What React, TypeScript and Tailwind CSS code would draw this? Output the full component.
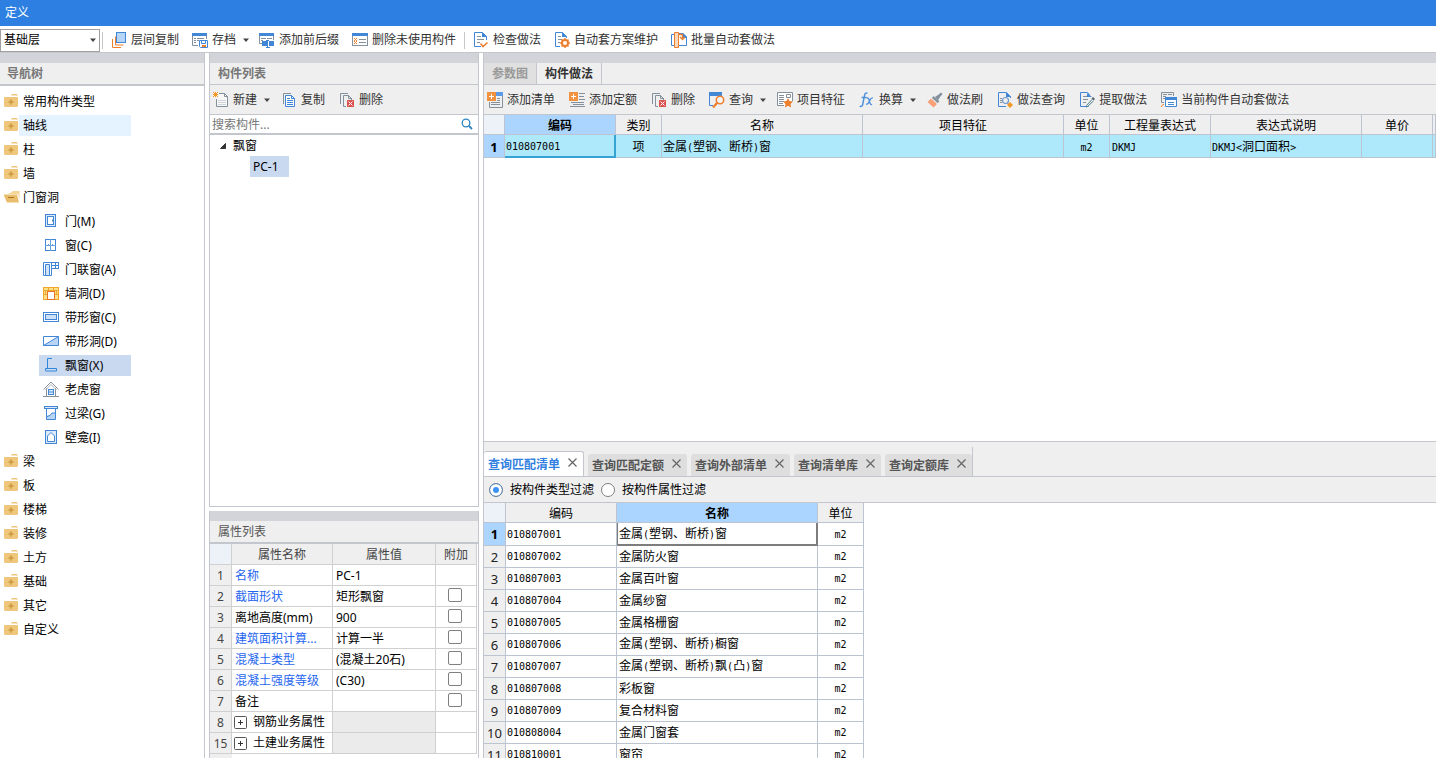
import React, { useState } from "react";
import type { ReactNode } from "react";

const BLUE = "#4287d6";
const ORANGE = "#ee7f2d";
const GRAY = "#84919c";

/* ---------- icons ---------- */

function Svg({ children, w = 16, h = 16 }: { children: ReactNode; w?: number; h?: number }) {
  return (
    <svg width={w} height={h} viewBox={`0 0 ${w} ${h}`} fill="none" className="shrink-0" aria-hidden="true">
      {children}
    </svg>
  );
}

const CopyLayers = () => (
  <Svg>
    <path d="M1.500 7v8.500h8.500M4.500 4.500v8.500h8" stroke={ORANGE} />
    <rect x="5.500" y=".5" width="9" height="10" fill="#b5d6f9" stroke={BLUE} />
  </Svg>
);

const Archive = () => (
  <Svg>
    <path d="M0 1h15v3H0z" fill={BLUE} />
    <path d="M.5 4v9.500H6M14.500 4v3" stroke={GRAY} />
    <path d="M2 6.500h2M5 6.500h7M2 8.500h2M5 8.500h2M2 10.500h2" stroke={GRAY} />
    <path d="M7.500 8.500h8v7h-7l-1-1z" fill="#fff" stroke={BLUE} />
    <path d="M9.500 9v2.500h4V9" stroke={BLUE} />
    <path d="M10 13h4v2h-4z" fill={ORANGE} />
  </Svg>
);

const Affix = () => (
  <Svg>
    <path d="M0 1h15v3H0z" fill={BLUE} />
    <path d="M.5 4v7.500H3M14.500 4v4" stroke={GRAY} />
    <path d="M2 6.500h5M8 6.500h5M2 8.500h2" stroke={GRAY} />
    <path d="M3 9h5v5H3zM10 9h5v5h-5z" fill={BLUE} />
    <path d="M7 8.500h3M8.500 8v7M7 15.500h4" stroke={BLUE} />
  </Svg>
);

const ListDelete = () => (
  <Svg>
    <rect x=".5" y="1.500" width="15" height="12" fill="#fff" stroke={GRAY} />
    <path d="M0 1h16v3H0z" fill={BLUE} />
    <path d="M2 6l3 3M5 6L2 9M2 9l3 3M5 9l-3 3" stroke={ORANGE} />
    <path d="M7 7.500h7M7 10.500h7" stroke={GRAY} />
  </Svg>
);

const CheckDoc = () => (
  <Svg>
    <path d="M13.500 8V4.500l-4-4h-8v14H8" stroke={BLUE} />
    <path d="M9 0l5 5H9z" fill={BLUE} />
    <path d="M4 4.500h4M4 7.500h7M4 10.500h3" stroke={GRAY} />
    <path d="M7.500 11.500l2.500 3 4.500-4" stroke={ORANGE} strokeWidth="1.600" />
  </Svg>
);

const GearDoc = () => (
  <Svg>
    <path d="M12.500 6V4.500l-4-4h-7v14H6" stroke={BLUE} />
    <path d="M8 0l5 5H8z" fill={BLUE} />
    <path d="M4 4.500h3M4 7.500h4M4 10.500h2" stroke={GRAY} />
    <circle cx="11" cy="11" r="3" stroke={ORANGE} strokeWidth="2" />
    <path d="M11 6v2M11 14v2M6 11h2M14 11h2M7.500 7.500l1.400 1.400M13.200 13.200l1.300 1.300M14.500 7.500l-1.300 1.400M8.900 13.200l-1.400 1.300" stroke={ORANGE} strokeWidth="1.500" />
  </Svg>
);

const BatchDoc = () => (
  <Svg>
    <path d="M4 2.500H.5v11H4" stroke={BLUE} />
    <path d="M8 1.500h4l3.500 3.500v8.500H8" stroke={BLUE} />
    <path d="M12 1l4 4v1h-4z" fill={BLUE} />
    <path d="M3.500.5h4v15h-4z" fill="#fbd9bd" stroke={ORANGE} />
    <path d="M7 2.500h4.500V7M9 5l2.500 2.500L14 5" stroke={ORANGE} strokeWidth="1.300" />
  </Svg>
);

const NewDoc = () => (
  <Svg>
    <path d="M6 1.500h5.500l3 3v10h-11V7" fill="#f7f7f7" stroke={GRAY} />
    <path d="M11.500 1.500v3h3" stroke={GRAY} />
    <path d="M5 8.500h8M5 10.500h8M5 12.500h8" stroke="#cfd5da" />
    <path d="M0 0l5 5M5 0L0 5M2.500 0v5M0 2.500h5" stroke="#f39a26" />
  </Svg>
);

const CopyDoc = () => (
  <Svg>
    <path d="M2.500 12V1.500H10" stroke={GRAY} />
    <path d="M4.500 3.500h6l3 3v8h-9z" fill="#fff" stroke={BLUE} />
    <path d="M10.500 3.500v3h3" stroke={BLUE} />
    <path d="M6 6.500h3M6 8.500h6M6 10.500h6M6 12.500h6" stroke={BLUE} />
  </Svg>
);

const DeleteDoc = () => (
  <Svg>
    <path d="M1.500 12V1.500H9" stroke={GRAY} />
    <path d="M7 14.500H4.500v-11h5l3 3V8M9.500 3v3.500H13" stroke={GRAY} />
    <path d="M8 8h7v7H8z" fill="#d9534f" />
    <path d="M9.500 9.500l4 4M13.500 9.500l-4 4" stroke="#fff" />
  </Svg>
);

const AddList = () => (
  <Svg>
    <path d="M9 1h6.500v14.500H2.500V10" stroke={GRAY} />
    <path d="M9 0h7v4H9z" fill="#5b9be6" />
    <path d="M10 6.500h3M10 8.500h3M4 10.500h9M4 12.500h9" stroke={GRAY} />
    <path d="M0 0h9v9H0z" fill="#f0923f" />
    <path d="M4.500 2v5M2 4.500h5" stroke="#fff" />
  </Svg>
);

const AddQuota = () => (
  <Svg>
    <path d="M10 1.500h6M10 4.500h5M10 7.500h6M2 10.500h13M1 14.500h15M4 12.500h11" stroke={GRAY} />
    <path d="M0 0h9v9H0z" fill="#f0923f" />
    <path d="M4.500 2v5M2 4.500h5" stroke="#fff" />
  </Svg>
);

const QueryIcon = () => (
  <Svg>
    <path d="M0 0h13v4H0z" fill={BLUE} />
    <path d="M.5 4v9.500H4" stroke={BLUE} />
    <circle cx="11" cy="8" r="3.700" fill="#f7f7f7" stroke={ORANGE} strokeWidth="1.600" />
    <path d="M8.500 10.500L4 15.500" stroke={ORANGE} strokeWidth="2.200" />
  </Svg>
);

const FeatureIcon = () => (
  <Svg>
    <path d="M7 13.500H.5V.5h15V9" fill="#fff" stroke={GRAY} />
    <path d="M2 3.500h5M2 5.500h5M2 7.500h5M2 9.500h5M2 11.500h4" stroke={GRAY} />
    <path d="M9.500 2.500h4v3h-4z" stroke={GRAY} />
    <path d="M11 6l1.500 3 3.500.4-2.500 2.500.6 3.600L11 13.800l-3.100 1.700.6-3.600L6 9.400 9.500 9z" fill={ORANGE} />
  </Svg>
);

const FxIcon = () => (
  <Svg>
    <path d="M8.500 1.300C6.800.4 5.900 1.500 5.500 3.500L3.800 12c-.4 2.200-1.500 3-3.200 2.200M2.600 5.500h5" stroke="#4a8fdc" strokeWidth="1.400" />
    <path d="M7.600 6.200c1.800-.8 2.200.5 2.800 3s1 4 2.600 3M13.800 6c-1.700-.4-2.500 1.500-3.300 3.100-.8 1.700-1.900 3.600-3.400 3.100" stroke="#4a8fdc" strokeWidth="1.300" />
  </Svg>
);

const BrushIcon = () => (
  <Svg>
    <path d="M8 5l3-2 3-2.500L15.500 2 13 5l-2 3.500z" fill={GRAY} />
    <path d="M6.500 4l6 5.500-2 1.500L5 6z" fill={GRAY} />
    <path d="M4 6.500l6 5.500-3.500 3.500L.5 10z" fill="#f9a077" />
  </Svg>
);

const DocSearch = () => (
  <Svg>
    <path d="M13.500 6V4.500l-4-4h-8v14H9" stroke={BLUE} />
    <path d="M9 0l5 5H9z" fill={BLUE} />
    <path d="M3 6.500h2M3 8.500h2M3 10.500h2" stroke={GRAY} />
    <circle cx="8.500" cy="8.500" r="3" stroke="#6c97cc" strokeWidth="1.200" />
    <path d="M10.500 11l1.500 1.500" stroke="#6c97cc" />
    <path d="M13 10l3 3-3 3-3-3z" fill="#f39a26" />
  </Svg>
);

const DocPen = () => (
  <Svg>
    <path d="M10.500 3V2.500l-2-2h-7v14h8" stroke={BLUE} />
    <path d="M4 4.500h5M4 7.500h5M4 10.500h3" stroke={GRAY} />
    <path d="M8 1l5 4H8z" fill={BLUE} />
    <path d="M14 5l2 2-1.500 1.500-2-2z" fill="#56626d" />
    <path d="M13 7.500l-5.500 6-.5 1.500 1.500-.5 6-5.500" stroke="#4f7f92" />
  </Svg>
);

const AutoApply = () => (
  <Svg>
    <path d="M3 10.500H.5V.5h12V4" stroke={GRAY} />
    <path d="M2 2.500h4M7 2.500h4M2 4.500h3M2 6.500h2" stroke={GRAY} />
    <path d="M4.500 5.500h11v9h-11z" fill="#fff" stroke={BLUE} />
    <path d="M4 5h12v3H4z" fill={BLUE} />
    <path d="M7 10.500h6M7 12.500h6" stroke={BLUE} />
    <path d="M.5 15c.2-1.500 1-2.500 2.500-2.500" stroke={ORANGE} />
  </Svg>
);

const FolderClosed = () => (
  <Svg w={15} h={14}>
    <path d="M7 1.500L8 0h5l1 1.500z" fill="#eec77c" />
    <path d="M0 3.500L1 3h12.500l.5.500V12l-1 1H1l-1-1z" fill="#eec77c" />
    <path d="M7 5.500v5M4.500 8h5" stroke="#cb9a3f" strokeWidth="1.600" />
  </Svg>
);

const FolderOpen = () => (
  <Svg w={16} h={14}>
    <path d="M7 2.500L9 1h6.500v9L14 4H4z" fill="#f4d596" />
    <path d="M-.5 4.500H13L15 12.500H3z" fill="#e9bd6b" />
    <path d="M4 7.500h6" stroke="#a8741f" />
  </Svg>
);

const treeIcons: Record<string, ReactNode> = {
  door: (
    <Svg>
      <rect x="2.500" y="1.500" width="10" height="12" fill="#dbe9fa" stroke={BLUE} />
      <rect x="4.500" y="3.500" width="6" height="8" fill="#fff" stroke={BLUE} />
      <path d="M9.500 6.500v2" stroke={BLUE} />
    </Svg>
  ),
  window: (
    <Svg>
      <rect x="2.500" y="2.500" width="10" height="11" fill="#fff" stroke={BLUE} />
      <path d="M7.500 2v12M2 8.500h11M5 7.500h1M9 7.500h1" stroke="#69a2e0" />
    </Svg>
  ),
  doorWindow: (
    <Svg>
      <path d="M.5 1.500h8v13h-8z" fill="#fff" stroke={BLUE} />
      <path d="M2.500 14.500v-11h4v11z" fill="#cfe1f7" stroke={BLUE} />
      <rect x="8.500" y="1.500" width="7" height="6" fill="#fff" stroke={BLUE} />
      <path d="M12.500 2v6M9 4.500h7" stroke={BLUE} />
    </Svg>
  ),
  wallHole: (
    <Svg>
      <rect x=".5" y="2.500" width="15" height="12" fill="#fde08a" stroke="#f2a52c" />
      <path d="M1 5.500h14M1 9.500h3M12 9.500h3M5.500 2v3M10.500 2v3M2.500 5v4M13.500 5v4" stroke="#f2a52c" />
      <rect x="4.500" y="6.500" width="7" height="8" fill="#fff" stroke="#e8742a" />
    </Svg>
  ),
  stripWindow: (
    <Svg>
      <rect x=".5" y="3.500" width="15" height="9" fill="#fff" stroke={BLUE} />
      <rect x="2.500" y="5.500" width="11" height="5" fill="#cfe1f7" stroke={BLUE} />
    </Svg>
  ),
  stripHole: (
    <Svg>
      <path d="M.5 3.500h15v9H.5z" fill="#fff" />
      <path d="M.5 12.500L15.500 3.500v9z" fill="#b9d5f5" />
      <path d="M.5 3.500h15v9H.5zM.5 12.500l15-9" stroke={BLUE} />
    </Svg>
  ),
  bay: (
    <Svg>
      <path d="M9 1.500H4.500v9.500M2.500 13.500v-2h11v2.500h-11z" stroke="#2f86dc" />
    </Svg>
  ),
  dormer: (
    <Svg>
      <path d="M.5 8.500L8 1l7.500 7.500M3.500 7v8M12.500 7v8M0 15.500h16" stroke={GRAY} />
      <path d="M2.500 9L8 3.500 13.500 9" stroke="#a9b2ba" />
      <rect x="5.500" y="8.500" width="5" height="5" fill="#dbe9fa" stroke={BLUE} />
      <path d="M5 11h6" stroke={BLUE} />
    </Svg>
  ),
  lintel: (
    <Svg>
      <path d="M3.500 4v10.500h9V4" fill="#fff" stroke={BLUE} />
      <path d="M4 14v-3l3-1 2-2h3v6z" fill="#b9d5f5" />
      <path d="M4 11.500l3-1 2-2.500h3" stroke={BLUE} />
      <rect x="1.500" y="1.500" width="13" height="2" fill="#dbe9fa" stroke={BLUE} />
    </Svg>
  ),
  niche: (
    <Svg>
      <rect x="2.500" y="1.500" width="11" height="13" fill="#dbe9fa" stroke={BLUE} />
      <path d="M4.500 12.500V7L8 3.500 11.500 7v5.500z" fill="#fff" stroke={BLUE} />
    </Svg>
  ),
};

const Arrow = () => (
  <Svg w={9} h={6}>
    <path d="M3 1.500h6L6 5z" fill="#444" />
  </Svg>
);

/* ---------- shared pieces ---------- */

type Tool = { label: string; icon: ReactNode; menu?: boolean };

function ToolButton({ label, icon, menu }: Tool) {
  return (
    <button type="button" className={`flex h-6 shrink-0 items-center gap-1 whitespace-nowrap text-[#333] ${menu ? "-mr-[3px]" : ""}`}>
      {icon}
      <span>{label}</span>
      {menu && <Arrow />}
    </button>
  );
}

function PanelTop() {
  return <div className="h-[10px] shrink-0 bg-[#d3d4d9]" />;
}

/* Half-width characters of grid cells use a fixed-pitch face. */
function GridText({ text }: { text: string }) {
  return (
    <>
      {text.split(/([\x21-\x7e]+)/).map((part, i) =>
        i % 2 ? (
          <span key={i} className="font-['DejaVu_Sans_Mono',monospace] text-[10px]">
            {part}
          </span>
        ) : (
          part
        ),
      )}
    </>
  );
}

/* ---------- navigation tree ---------- */

const openings = [
  ["门(M)", "door"],
  ["窗(C)", "window"],
  ["门联窗(A)", "doorWindow"],
  ["墙洞(D)", "wallHole"],
  ["带形窗(C)", "stripWindow"],
  ["带形洞(D)", "stripHole"],
  ["飘窗(X)", "bay"],
  ["老虎窗", "dormer"],
  ["过梁(G)", "lintel"],
  ["壁龛(I)", "niche"],
];

const groups = ["常用构件类型", "轴线", "柱", "墙", "门窗洞", "梁", "板", "楼梯", "装修", "土方", "基础", "其它", "自定义"];

function NavTree() {
  return (
    <aside className="flex w-[205px] shrink-0 flex-col border-r border-[#c3c6cd] bg-white">
      <PanelTop />
      <h2 className="h-[23px] shrink-0 border-b-2 border-[#c3c6cd] bg-[#efefef] pl-[7px] font-bold leading-[21px] text-[#777]">
        导航树
      </h2>
      <ul className="pt-[3px]">
        {groups.map((g) => (
          <li key={g}>
            <button type="button" className="flex h-6 items-center pl-1">
              <span className="flex w-[15px]">{g === "门窗洞" ? <FolderOpen /> : <FolderClosed />}</span>
              <span className={`h-[21px] w-[112px] pl-1 text-left leading-[21px] ${g === "轴线" ? "bg-[#e5f2ff]" : ""}`}>{g}</span>
            </button>
            {g === "门窗洞" && (
              <ul>
                {openings.map(([label, icon]) => (
                  <li key={label} className="flex h-6 items-center pl-[39px]">
                    <button
                      type="button"
                      className={`flex h-[21px] w-[92px] items-center gap-[6px] pl-1 leading-[21px] ${icon === "bay" ? "bg-[#c9d9ef]" : ""}`}
                    >
                      {treeIcons[icon]}
                      <span>{label}</span>
                    </button>
                  </li>
                ))}
              </ul>
            )}
          </li>
        ))}
      </ul>
    </aside>
  );
}

/* ---------- component list and properties ---------- */

function ComponentList() {
  return (
    <section className="flex min-h-0 flex-1 flex-col border-x border-b border-[#c3c6cd] bg-white">
      <PanelTop />
      <h2 className="h-[22px] shrink-0 border-b border-[#c3c6cd] bg-[#efefef] pl-2 font-bold leading-[21px] text-[#777]">构件列表</h2>
      <div className="flex h-[30px] shrink-0 items-center gap-[14px] border-b border-[#c3c6cd] bg-[#efefef] pl-[3px]">
        <ToolButton label="新建" icon={<NewDoc />} menu />
        <ToolButton label="复制" icon={<CopyDoc />} />
        <ToolButton label="删除" icon={<DeleteDoc />} />
      </div>
      <label className="flex h-5 shrink-0 items-center border-b-2 border-[#c3c6cd] pr-[5px]">
        <input
          type="text"
          aria-label="搜索构件"
          placeholder="搜索构件..."
          className="h-[18px] min-w-0 flex-1 bg-transparent pl-[2px] outline-none placeholder:text-[#777]"
        />
        <Svg w={12} h={12}>
          <circle cx="5" cy="5" r="3.800" stroke="#2e86c1" strokeWidth="1.300" />
          <path d="M8 8l3 3" stroke="#2e86c1" strokeWidth="1.800" />
        </Svg>
      </label>
      <ul>
        <li>
          <button type="button" className="flex h-[21px] items-center gap-[6px] pl-[9px]">
            <Svg w={8} h={8}>
              <path d="M6.500 1.500v5h-5z" fill="#333" stroke="#333" />
            </Svg>
            <span>飘窗</span>
          </button>
          <ul className="pl-10">
            <li>
              <button type="button" className="h-[21px] w-[39px] bg-[#c9d9ef] pl-[3px] text-left">
                PC-1
              </button>
            </li>
          </ul>
        </li>
      </ul>
    </section>
  );
}

type Prop = { n: number; name: string; value: string; link?: boolean; check?: boolean; group?: boolean };

const props: Prop[] = [
  { n: 1, name: "名称", value: "PC-1", link: true },
  { n: 2, name: "截面形状", value: "矩形飘窗", link: true, check: true },
  { n: 3, name: "离地高度(mm)", value: "900", check: true },
  { n: 4, name: "建筑面积计算...", value: "计算一半", link: true, check: true },
  { n: 5, name: "混凝土类型", value: "(混凝土20石)", link: true, check: true },
  { n: 6, name: "混凝土强度等级", value: "(C30)", link: true, check: true },
  { n: 7, name: "备注", value: "", check: true },
  { n: 8, name: "钢筋业务属性", value: "", group: true },
  { n: 15, name: "土建业务属性", value: "", group: true },
];

function PropertyList() {
  const box = "h-[21px] border-r border-b border-[#d0d0d0] whitespace-nowrap";
  const cell = `${box} p-0 pt-[2px]`;
  return (
    <section className="flex shrink-0 flex-col border-x border-[#c3c6cd] bg-white">
      <PanelTop />
      <h2 className="h-[23px] border-b-2 border-[#c3c6cd] bg-[#efefef] pl-2 leading-[21px] text-[#555]">属性列表</h2>
      <table className="w-[267px] table-fixed border-separate border-spacing-0">
        <colgroup>
          <col className="w-[22px]" />
          <col className="w-[101px]" />
          <col className="w-[103px]" />
          <col />
        </colgroup>
        <thead>
          <tr>
            <th className={`${cell} bg-[#edf2f8]`} />
            {["属性名称", "属性值", "附加"].map((h) => (
              <th key={h} scope="col" className={`${cell} bg-[#efefef] font-normal text-[#444]`}>
                {h}
              </th>
            ))}
          </tr>
        </thead>
        <tbody>
          {props.map((p) => (
            <tr key={p.n}>
              <th scope="row" className={`${cell} bg-[#efefef] font-normal text-[#444]`}>
                {p.n}
              </th>
              {p.group ? (
                <td className={`${box} p-0 pl-[2px]`}>
                  <button type="button" className="flex items-center gap-[6px]">
                    <Svg w={13} h={13}>
                      <rect x=".5" y=".5" width="12" height="12" rx="1" fill="#fff" stroke="#555" />
                      <path d="M4 6.500h5M6.500 4v5" stroke="#333" />
                    </Svg>
                    {p.name}
                  </button>
                </td>
              ) : (
                <td className={`${cell} pl-[3px] ${p.link ? "text-[#1f66ef]" : ""}`}>{p.name}</td>
              )}
              <td className={`${cell} pl-[3px] ${p.group ? "bg-[#ebebeb]" : ""}`}>{p.value}</td>
              <td className={`${box} p-0 pr-[2px] pb-[2px] leading-none`}>
                {p.check && (
                  <input
                    type="checkbox"
                    aria-label={`附加 ${p.name}`}
                    className="mx-auto block size-[14px] appearance-none rounded-[2px] border border-[#808080] bg-white checked:bg-[#4a9bf0]"
                  />
                )}
              </td>
            </tr>
          ))}
        </tbody>
      </table>
      <div className="h-1 w-[22px] bg-[#efefef]" />
    </section>
  );
}

/* ---------- practice panel ---------- */

const practiceTools: Tool[] = [
  { label: "添加清单", icon: <AddList /> },
  { label: "添加定额", icon: <AddQuota /> },
  { label: "删除", icon: <DeleteDoc /> },
  { label: "查询", icon: <QueryIcon />, menu: true },
  { label: "项目特征", icon: <FeatureIcon /> },
  { label: "换算", icon: <FxIcon />, menu: true },
  { label: "做法刷", icon: <BrushIcon /> },
  { label: "做法查询", icon: <DocSearch /> },
  { label: "提取做法", icon: <DocPen /> },
  { label: "当前构件自动套做法", icon: <AutoApply /> },
];

function PracticePanel() {
  const head = "h-5 border-r border-b border-[#bcc4d2] p-0 pt-[2px] whitespace-nowrap";
  const cell = "h-[23px] border-r border-b border-[#bcc4d2] bg-[#aee9fb] p-0 pt-[2px] whitespace-nowrap";
  return (
    <section className="flex min-h-0 flex-1 flex-col bg-white">
      <PanelTop />
      <div role="tablist" className="flex h-[22px] shrink-0 border-b border-[#c3c6cd] bg-[#efefef]">
        <button type="button" role="tab" aria-selected="false" className="border-r border-[#c3c6cd] bg-[#e0e0e0] px-2 font-bold text-[#999]">
          参数图
        </button>
        <button type="button" role="tab" aria-selected="true" className="border-r border-[#c3c6cd] px-2 font-bold text-[#333]">
          构件做法
        </button>
      </div>
      <div className="flex h-[30px] shrink-0 items-center gap-[14px] border-b border-[#c3c6cd] bg-[#efefef] pl-[3px]">
        {practiceTools.map((t) => (
          <ToolButton key={t.label} {...t} />
        ))}
      </div>
      <table className="w-full table-fixed border-separate border-spacing-0">
        <colgroup>
          <col className="w-[21px]" />
          <col className="w-[111px]" />
          <col className="w-[46px]" />
          <col className="w-[201px]" />
          <col className="w-[201px]" />
          <col className="w-[46px]" />
          <col className="w-[101px]" />
          <col className="w-[151px]" />
          <col className="w-[71px]" />
          <col />
        </colgroup>
        <thead>
          <tr>
            <th className={`${head} bg-[#edf2f8]`} />
            {["编码", "类别", "名称", "项目特征", "单位", "工程量表达式", "表达式说明", "单价", ""].map((h) => (
              <th key={h} scope="col" className={`${head} ${h === "编码" ? "bg-[#abd5ff] font-bold" : "bg-[#efefef] font-normal"}`}>
                {h}
              </th>
            ))}
          </tr>
        </thead>
        <tbody>
          <tr>
            <th scope="row" className="h-[23px] border-r border-b border-[#bcc4d2] bg-[#abd5ff] p-0 pt-[2px] text-[13px] font-bold">
              1
            </th>
            <td className="h-[23px] border-r-2 border-b-2 border-[#35a3d3] bg-[#aee9fb] p-0 pt-[2px] pl-px">
              <GridText text="010807001" />
            </td>
            <td className={`${cell} text-center`}>项</td>
            <td className={`${cell} pl-px`}>
              <GridText text="金属(塑钢、断桥)窗" />
            </td>
            <td className={cell} />
            <td className={`${cell} text-center`}>
              <GridText text="m2" />
            </td>
            <td className={`${cell} pl-[2px]`}>
              <GridText text="DKMJ" />
            </td>
            <td className={`${cell} pl-px`}>
              <GridText text="DKMJ<洞口面积>" />
            </td>
            <td className={cell} />
            <td className={cell} />
          </tr>
        </tbody>
      </table>
    </section>
  );
}

/* ---------- query panel ---------- */

const queryTabs = ["查询匹配清单", "查询匹配定额", "查询外部清单", "查询清单库", "查询定额库"];

const matches = [
  ["010807001", "金属(塑钢、断桥)窗"],
  ["010807002", "金属防火窗"],
  ["010807003", "金属百叶窗"],
  ["010807004", "金属纱窗"],
  ["010807005", "金属格栅窗"],
  ["010807006", "金属(塑钢、断桥)橱窗"],
  ["010807007", "金属(塑钢、断桥)飘(凸)窗"],
  ["010807008", "彩板窗"],
  ["010807009", "复合材料窗"],
  ["010808004", "金属门窗套"],
  ["010810001", "窗帘"],
];

function QueryPanel() {
  const [filter, setFilter] = useState("type");
  const line = "border-r border-b border-[#bcc4d2] p-0 whitespace-nowrap";
  const head = `${line} h-5 pt-[2px]`;
  const radio =
    "size-[14px] appearance-none rounded-full border border-[#808080] bg-white checked:border-[#6b7f94] checked:bg-[#3b93f2] checked:shadow-[inset_0_0_0_3px_#fff]";
  return (
    <section className="flex h-[317px] shrink-0 flex-col overflow-hidden border-t border-[#c3c6cd] bg-white">
      <div className="flex h-[35px] shrink-0 items-end border-b border-[#c3c6cd] bg-[#efefef]">
        <div role="tablist" className="flex h-[29px] items-end gap-1 border-r border-[#c3c6cd]">
          {queryTabs.map((t, i) => (
            <div
              key={t}
              className={`flex items-center gap-2 rounded-t-[3px] pr-[6px] pl-1 ${
                i === 0 ? "h-[25px] border-t border-r border-[#c3c6cd] bg-white" : "h-[22px] bg-[#dedede]"
              }`}
            >
              <button
                type="button"
                role="tab"
                aria-selected={i === 0}
                className={`pt-[2px] font-bold ${i === 0 ? "text-[#2f80e0]" : "text-[#555]"}`}
              >
                {t}
              </button>
              <button type="button" aria-label={`关闭 ${t}`} className="pb-1">
                <Svg w={9} h={9}>
                  <path d="M.5.5l8 8M8.500.5l-8 8" stroke="#666" strokeWidth="1.200" />
                </Svg>
              </button>
            </div>
          ))}
        </div>
      </div>
      <div className="flex h-[26px] shrink-0 items-center gap-[7px] border-b border-[#c3c6cd] bg-[#efefef] pl-[5px]">
        <label className="flex items-center gap-[7px]">
          <input type="radio" name="filter" className={radio} checked={filter === "type"} onChange={() => setFilter("type")} />
          按构件类型过滤
        </label>
        <label className="flex items-center gap-[7px]">
          <input type="radio" name="filter" className={radio} checked={filter === "prop"} onChange={() => setFilter("prop")} />
          按构件属性过滤
        </label>
      </div>
      <table className="w-[380px] table-fixed border-separate border-spacing-0">
        <colgroup>
          <col className="w-[22px]" />
          <col className="w-[111px]" />
          <col className="w-[201px]" />
          <col />
        </colgroup>
        <thead>
          <tr>
            <th className={`${head} bg-[#edf2f8]`} />
            <th scope="col" className={`${head} bg-[#efefef] font-normal`}>编码</th>
            <th scope="col" className={`${head} bg-[#abd5ff] font-bold`}>名称</th>
            <th scope="col" className={`${head} bg-[#efefef] font-normal`}>单位</th>
          </tr>
        </thead>
        <tbody>
          {matches.map(([code, name], i) => (
            <tr key={code} className={i === 0 ? "h-[23px]" : "h-[22px]"}>
              <th scope="row" className={`${line} text-[13px] ${i === 0 ? "bg-[#abd5ff] font-bold" : "bg-[#efefef] font-normal text-[#222]"}`}>
                {i + 1}
              </th>
              <td className={`${line} pl-px`}>
                <GridText text={code} />
              </td>
              <td
                className={
                  i === 0
                    ? "border-r-2 border-b-2 border-l border-[#7d7d7d] p-0 pt-[2px] pl-px whitespace-nowrap"
                    : `${line} pl-[2px]`
                }
              >
                <GridText text={name} />
              </td>
              <td className={`${line} text-center`}>
                <GridText text="m2" />
              </td>
            </tr>
          ))}
        </tbody>
      </table>
    </section>
  );
}

/* ---------- window ---------- */

const Divider = () => <div className="h-[17px] w-px bg-[#c8c8c8]" />;

export default function App() {
  return (
    <div className="flex h-screen flex-col overflow-hidden bg-white font-['Noto_Sans','Noto_Sans_CJK_SC',sans-serif] text-[12px] leading-4 text-black">
      <header className="h-[26px] shrink-0 bg-[#2d7fe1] pl-[5px] leading-[26px] text-white">定义</header>
      <nav className="flex h-[27px] shrink-0 items-center border-b border-[#c3c6cd] pt-[2px]">
        <div className="relative w-[100px]">
          <select aria-label="楼层" className="block h-[23px] w-full appearance-none border border-[#a0a0a0] bg-white pl-[3px]">
            <option>基础层</option>
          </select>
          <span className="pointer-events-none absolute top-2 right-1">
            <Arrow />
          </span>
        </div>
        <div className="flex items-center gap-2 pl-[2px]">
          <Divider />
          <div className="flex items-center gap-[13px]">
            <ToolButton label="层间复制" icon={<CopyLayers />} />
            <ToolButton label="存档" icon={<Archive />} menu />
            <ToolButton label="添加前后缀" icon={<Affix />} />
            <ToolButton label="删除未使用构件" icon={<ListDelete />} />
          </div>
          <Divider />
          <div className="flex items-center gap-[13px]">
            <ToolButton label="检查做法" icon={<CheckDoc />} />
            <ToolButton label="自动套方案维护" icon={<GearDoc />} />
            <ToolButton label="批量自动套做法" icon={<BatchDoc />} />
          </div>
        </div>
      </nav>
      <div className="flex min-h-0 flex-1 gap-1">
        <NavTree />
        <div className="flex w-[270px] shrink-0 flex-col gap-1">
          <ComponentList />
          <PropertyList />
        </div>
        <main className="flex min-w-0 flex-1 flex-col border-l border-[#c3c6cd]">
          <PracticePanel />
          <QueryPanel />
        </main>
      </div>
    </div>
  );
}
